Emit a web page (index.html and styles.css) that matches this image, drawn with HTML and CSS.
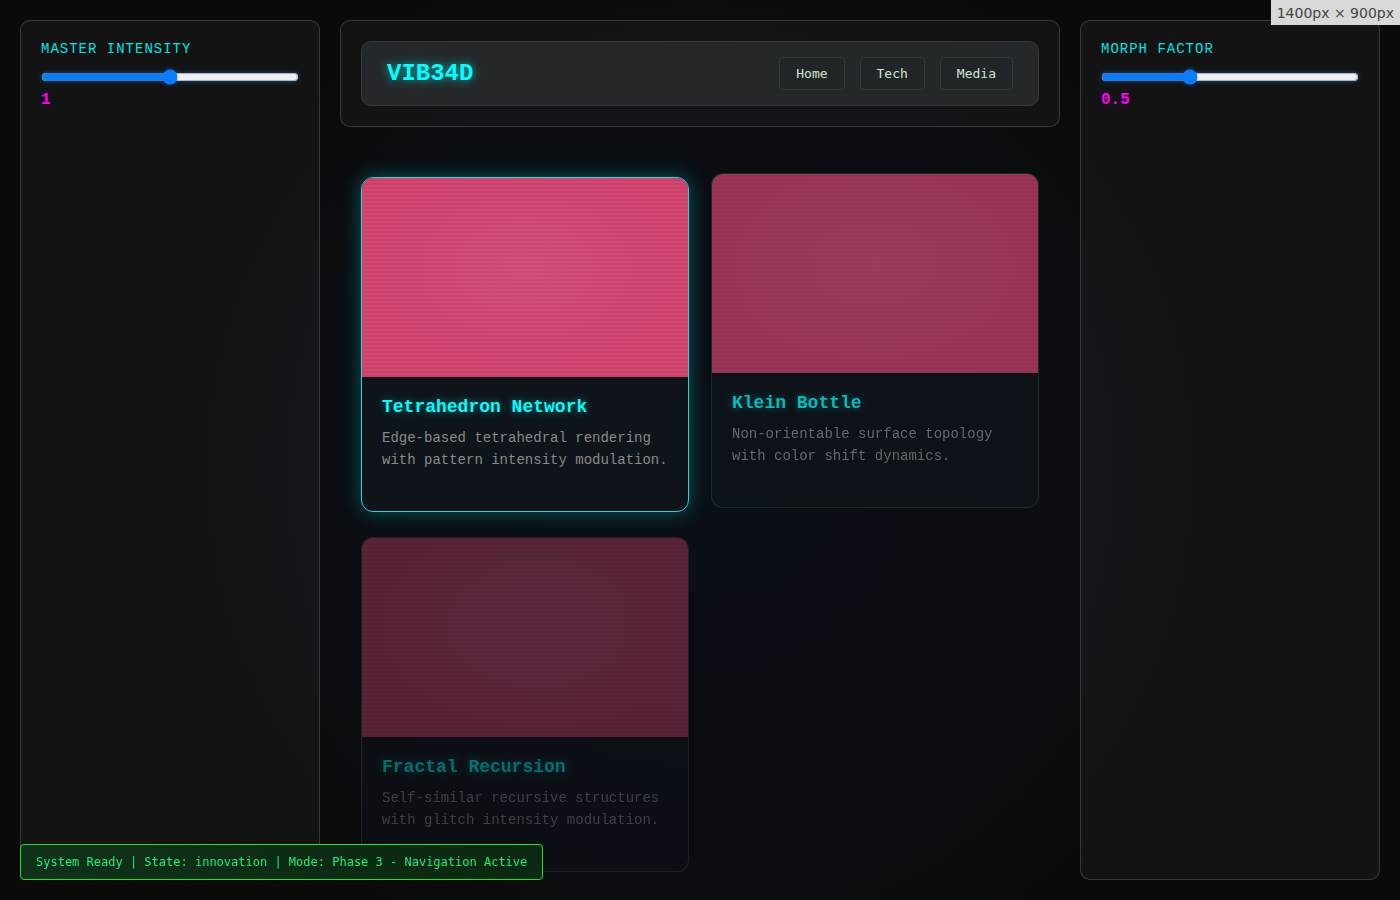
FILE: index.html
```html
<!DOCTYPE html>
<html lang="en">
<head>
    <meta charset="UTF-8">
    <meta name="viewport" content="width=device-width, initial-scale=1.0">
    <title>VIB34D</title>
    <link rel="stylesheet" href="styles.css">
</head>
<body>
    <div class="layout">
        <div class="panel">
            <label class="control-label">MASTER INTENSITY</label>
            <input type="range" class="slider" min="0" max="2" step="0.1" value="1">
            <div class="control-value">1</div>
        </div>

        <div class="center">
            <div class="header">
                <nav class="nav">
                    <div class="logo">VIB34D</div>
                    <div class="nav-links">
                        <button class="nav-btn">Home</button>
                        <button class="nav-btn">Tech</button>
                        <button class="nav-btn">Media</button>
                    </div>
                </nav>
            </div>

            <div class="cards">
                <div class="card active">
                    <div class="card-visual"></div>
                    <div class="card-body">
                        <h3 class="card-title">Tetrahedron Network</h3>
                        <p class="card-text">Edge-based tetrahedral rendering with pattern intensity modulation.</p>
                    </div>
                </div>
                <div class="card near">
                    <div class="card-visual"></div>
                    <div class="card-body">
                        <h3 class="card-title">Klein Bottle</h3>
                        <p class="card-text">Non-orientable surface topology with color shift dynamics.</p>
                    </div>
                </div>
                <div class="card far">
                    <div class="card-visual"></div>
                    <div class="card-body">
                        <h3 class="card-title">Fractal Recursion</h3>
                        <p class="card-text">Self-similar recursive structures with glitch intensity modulation.</p>
                    </div>
                </div>
            </div>
        </div>

        <div class="panel">
            <label class="control-label">MORPH FACTOR</label>
            <input type="range" class="slider" min="0" max="1.5" step="0.1" value="0.5">
            <div class="control-value">0.5</div>
        </div>
    </div>

    <div class="status">System Ready | State: innovation | Mode: Phase 3 - Navigation Active</div>
    <div class="size-tag">1400px × 900px</div>
</body>
</html>
```

FILE: styles.css
```css
* {
    margin: 0;
    padding: 0;
    box-sizing: border-box;
}

body {
    height: 100vh;
    overflow: hidden;
    font-family: "Liberation Mono", "Courier New", monospace;
    color: #ddd;
    background:
        radial-gradient(ellipse 545px 560px at 50% 52%, #0a0f15 0%, #0a0d12 70%, rgba(10,10,10,0) 100%),
        #0a0a0a;
}

.layout {
    height: 100vh;
    display: grid;
    grid-template-columns: 300px 1fr 300px;
    gap: 20px;
    padding: 20px;
}

/* side panels */
.panel {
    background: rgba(255, 255, 255, 0.04);
    border: 1px solid rgba(255, 255, 255, 0.16);
    border-radius: 10px;
    padding: 20px;
}

.control-label {
    display: block;
    font-size: 14px;
    line-height: 16px;
    letter-spacing: 1px;
    color: #00e5e5;
    margin-bottom: 12px;
}

.slider {
    display: block;
    width: 100%;
    margin: 2px 0 6px;
    accent-color: #0a7cff;
    filter: drop-shadow(0 0 2px rgba(10, 124, 255, 0.6));
}

.control-value {
    font-size: 16px;
    line-height: 18px;
    font-weight: bold;
    color: #ff00ff;
}

/* center column */
.center {
    display: flex;
    flex-direction: column;
    gap: 20px;
    min-width: 0;
}

.header {
    background: rgba(255, 255, 255, 0.035);
    border: 1px solid rgba(255, 255, 255, 0.16);
    border-radius: 10px;
    padding: 20px;
}

.nav {
    display: flex;
    align-items: center;
    justify-content: space-between;
    height: 65px;
    padding: 0 25px;
    background: #25282a;
    border: 1px solid #383c3e;
    border-radius: 10px;
}

.logo {
    font-size: 24px;
    font-weight: bold;
    color: #00ffff;
    text-shadow: 0 0 10px rgba(0, 255, 255, 0.7);
}

.nav-links {
    display: flex;
    gap: 15px;
}

.nav-btn {
    font-family: "DejaVu Sans Mono", monospace;
    font-size: 13px;
    line-height: 15px;
    padding: 8px 16px;
    color: #cfe8cf;
    background: rgba(0, 0, 0, 0.06);
    border: 1px solid #2f3c37;
    border-radius: 4px;
}

.cards {
    display: grid;
    grid-template-columns: 328px 328px;
    grid-auto-rows: 335px;
    column-gap: 22px;
    row-gap: 29px;
    padding: 26px 21px 0;
}

.card {
    display: flex;
    flex-direction: column;
    overflow: hidden;
    background: #0e141a;
    border: 1px solid rgba(40, 90, 40, 0.6);
    border-radius: 12px;
}

.card-visual {
    height: 199px;
    flex-shrink: 0;
    background:
        repeating-linear-gradient(0deg, rgba(0, 0, 0, 0.045) 0 2px, rgba(255, 255, 255, 0.02) 2px 4px),
        radial-gradient(ellipse at 50% 45%, #d24d7e 0%, #d2436e 70%);
}

.card-body {
    flex: 1;
    padding: 20px 20px 20px;
}

.card-title {
    font-size: 18px;
    line-height: 21px;
    font-weight: bold;
    color: #00ffff;
    text-shadow: 0 0 8px rgba(0, 255, 255, 0.45);
    margin-bottom: 9px;
}

.card-text {
    font-size: 14px;
    line-height: 22px;
    color: #8a8a8a;
}

.card.active {
    transform: translateY(4px);
    border-color: #19d8dc;
    box-shadow: 0 0 20px rgba(0, 255, 255, 0.3);
}

.card.near {
    opacity: 0.72;
}

.card.far {
    opacity: 0.4;
    border-color: rgba(80, 80, 80, 0.7);
}

/* status bar */
.status {
    position: fixed;
    left: 20px;
    bottom: 20px;
    height: 36px;
    padding: 0 15px;
    display: flex;
    align-items: center;
    font-family: "DejaVu Sans Mono", monospace;
    font-size: 12px;
    color: #1cf27a;
    background: linear-gradient(90deg, #10301a, #0b2810);
    border: 1px solid #22e31f;
    border-radius: 4px;
}

.size-tag {
    position: fixed;
    top: 0;
    right: 0;
    height: 25px;
    padding: 0 6px;
    display: flex;
    align-items: center;
    font-family: "DejaVu Sans", sans-serif;
    font-size: 14px;
    color: #444;
    background: #d9d9d9;
}
```
